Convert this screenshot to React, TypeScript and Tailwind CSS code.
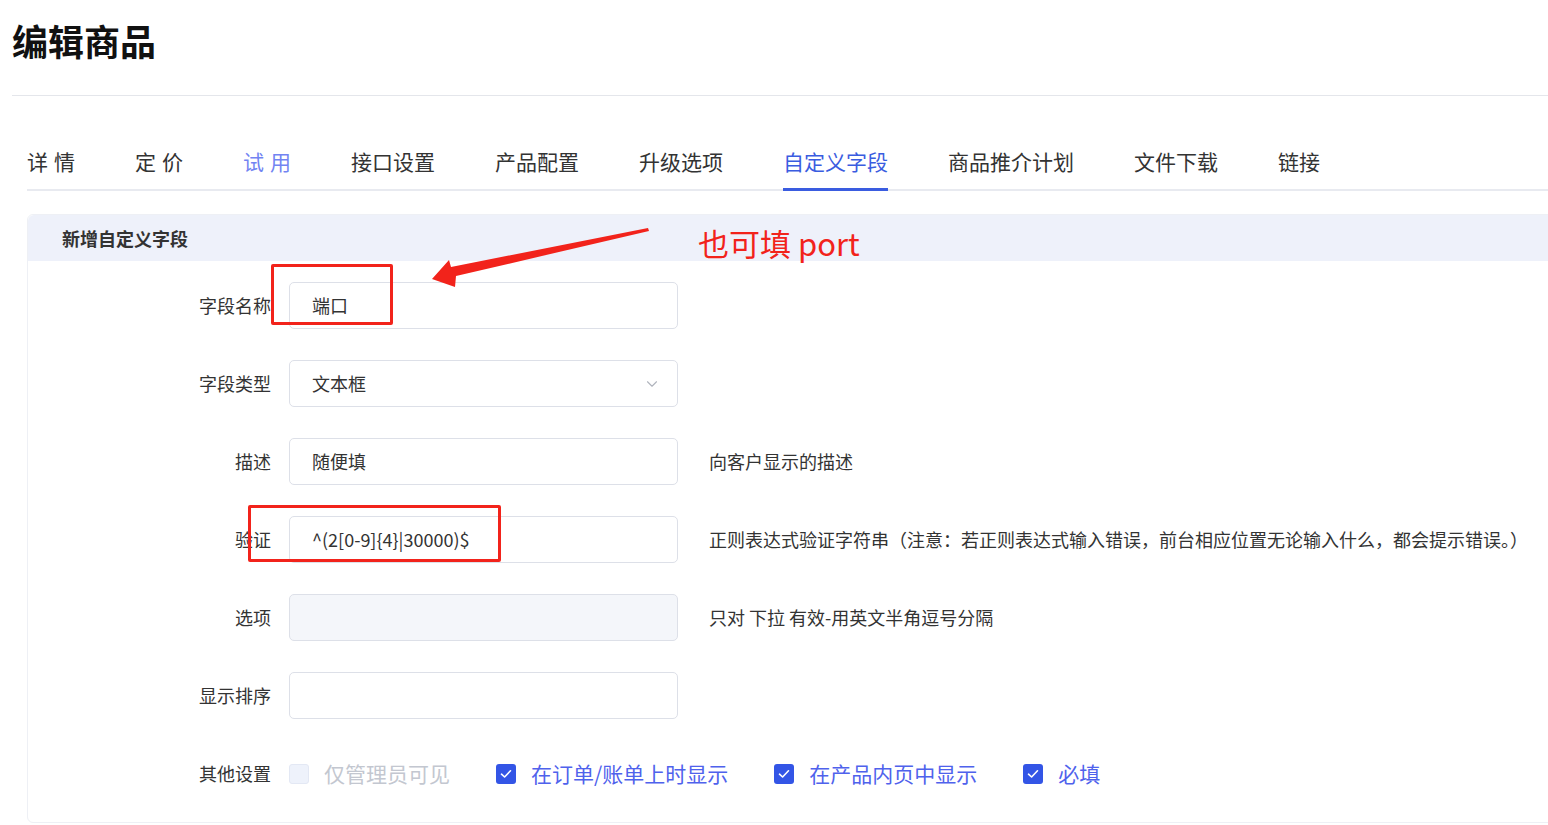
import { ChevronDown } from "lucide-react";

const tabs = [
  { label: "详 情", w: "w-[48px]" },
  { label: "定 价", w: "w-[48px]" },
  { label: "试 用", w: "w-[48px]", tone: "soft" },
  { label: "接口设置" },
  { label: "产品配置" },
  { label: "升级选项" },
  { label: "自定义字段", tone: "active" },
  { label: "商品推介计划" },
  { label: "文件下载" },
  { label: "链接" },
];

function Row({ label, children, hint }: { label: string; children: React.ReactNode; hint?: string }) {
  return (
    <div className="flex h-[47px] items-center">
      <div className="w-[243px] shrink-0 text-right text-[18px] text-[#333]">{label}</div>
      <div className="ml-[18px] w-[389px] shrink-0">{children}</div>
      {hint ? <div className="ml-[31px] whitespace-nowrap text-[18px] text-[#333]">{hint}</div> : null}
    </div>
  );
}

function Field({ value, disabled }: { value?: string; disabled?: boolean }) {
  return (
    <div
      className={`flex h-[47px] items-center rounded-[5px] border border-[#dde0e8] px-[22px] text-[18px] text-[#333] ${
        disabled ? "bg-[#f4f6fa]" : "bg-white"
      }`}
    >
      {value}
    </div>
  );
}

function Check({ label, checked, disabled }: { label: string; checked?: boolean; disabled?: boolean }) {
  return (
    <div className="flex items-center gap-[15px]">
      {checked ? (
        <span className="flex size-[20px] items-center justify-center rounded-[3px] bg-[#3355e6]">
          <svg width="12" height="10" viewBox="0 0 12 10" fill="none">
            <path d="M1.5 5.2 4.6 8 10.5 1.8" stroke="white" strokeWidth="1.6" strokeLinecap="round" strokeLinejoin="round" />
          </svg>
        </span>
      ) : (
        <span className="size-[20px] rounded-[3px] border border-[#e3e8f4] bg-[#eef2fb]" />
      )}
      <span className={`text-[21px] ${disabled ? "text-[#c3c7d0]" : "text-[#4f62ec]"}`}>{label}</span>
    </div>
  );
}

export default function App() {
  return (
    <div
      className="relative h-[825px] w-[1548px] overflow-hidden bg-white pl-[12px]"
      style={{ fontFamily: '"Noto Sans CJK SC", "Noto Sans", sans-serif' }}
    >
      <div className="h-[96px] border-b border-[#e4e6eb]">
        <h1 className="pt-[16px] text-[36px] font-bold leading-[48px] text-[#111]">编辑商品</h1>
      </div>

      <div className="ml-[15px] mt-[51px] flex gap-[60px] border-b-2 border-[#e8eaf0] pb-[14px]">
        {tabs.map((t) => (
          <div
            key={t.label}
            className={`relative flex justify-between whitespace-nowrap text-[21px] leading-[28px] ${t.w ?? ""} ${
              t.tone === "active" ? "text-[#3a5ce0]" : t.tone === "soft" ? "text-[#7284f2]" : "text-[#333]"
            }`}
          >
            {t.w ? (
              t.label.split(" ").map((c) => <span key={c}>{c}</span>)
            ) : (
              t.label
            )}
            {t.tone === "active" ? (
              <span className="absolute -bottom-[16px] left-0 right-0 h-[3px] bg-[#3a5ce0]" />
            ) : null}
          </div>
        ))}
      </div>

      <section className="ml-[15px] mt-[23px] w-[1540px] rounded-[6px] border border-[#eef0f5] pb-[25px]">
        <div className="flex h-[46px] items-center rounded-t-[6px] bg-[#eef1fa] pl-[34px] text-[18px] font-bold text-[#333]">
          新增自定义字段
        </div>
        <div className="flex flex-col gap-[31px] pt-[21px]">
          <Row label="字段名称">
            <Field value="端口" />
          </Row>
          <Row label="字段类型">
            <div className="flex h-[47px] items-center justify-between rounded-[5px] border border-[#dde0e8] bg-white pl-[22px] pr-[16px] text-[18px] text-[#333]">
              文本框
              <ChevronDown size={18} strokeWidth={1.5} className="text-[#b0b4bd]" />
            </div>
          </Row>
          <Row label="描述" hint="向客户显示的描述">
            <Field value="随便填" />
          </Row>
          <Row
            label="验证"
            hint="正则表达式验证字符串（注意：若正则表达式输入错误，前台相应位置无论输入什么，都会提示错误。）"
          >
            <Field value="^(2[0-9]{4}|30000)$" />
          </Row>
          <Row label="选项" hint="只对 下拉 有效-用英文半角逗号分隔">
            <Field disabled />
          </Row>
          <Row label="显示排序">
            <Field />
          </Row>
          <div className="flex h-[47px] items-center">
            <div className="w-[243px] shrink-0 text-right text-[18px] text-[#333]">其他设置</div>
            <div className="ml-[18px] flex items-center gap-[46px]">
              <Check label="仅管理员可见" disabled />
              <Check label="在订单/账单上时显示" checked />
              <Check label="在产品内页中显示" checked />
              <Check label="必填" checked />
            </div>
          </div>
        </div>
      </section>

      {/* annotations */}
      <div className="absolute left-[271px] top-[264px] h-[61px] w-[122px] rounded-[2px] border-[3px] border-[#f2231b]" />
      <div className="absolute left-[248px] top-[505px] h-[57px] w-[253px] rounded-[2px] border-[3px] border-[#f2231b]" />
      <svg className="absolute left-0 top-0" width="1548" height="825" style={{ pointerEvents: "none" }}>
        <polygon
          points="432,279 449,260 451,267 648,228 649,231 456,276 455,287"
          fill="#f2231b"
        />
      </svg>
      <div className="absolute left-[698px] top-[223px] text-[31px] leading-[40px] text-[#f2231b]">也可填 port</div>
    </div>
  );
}
